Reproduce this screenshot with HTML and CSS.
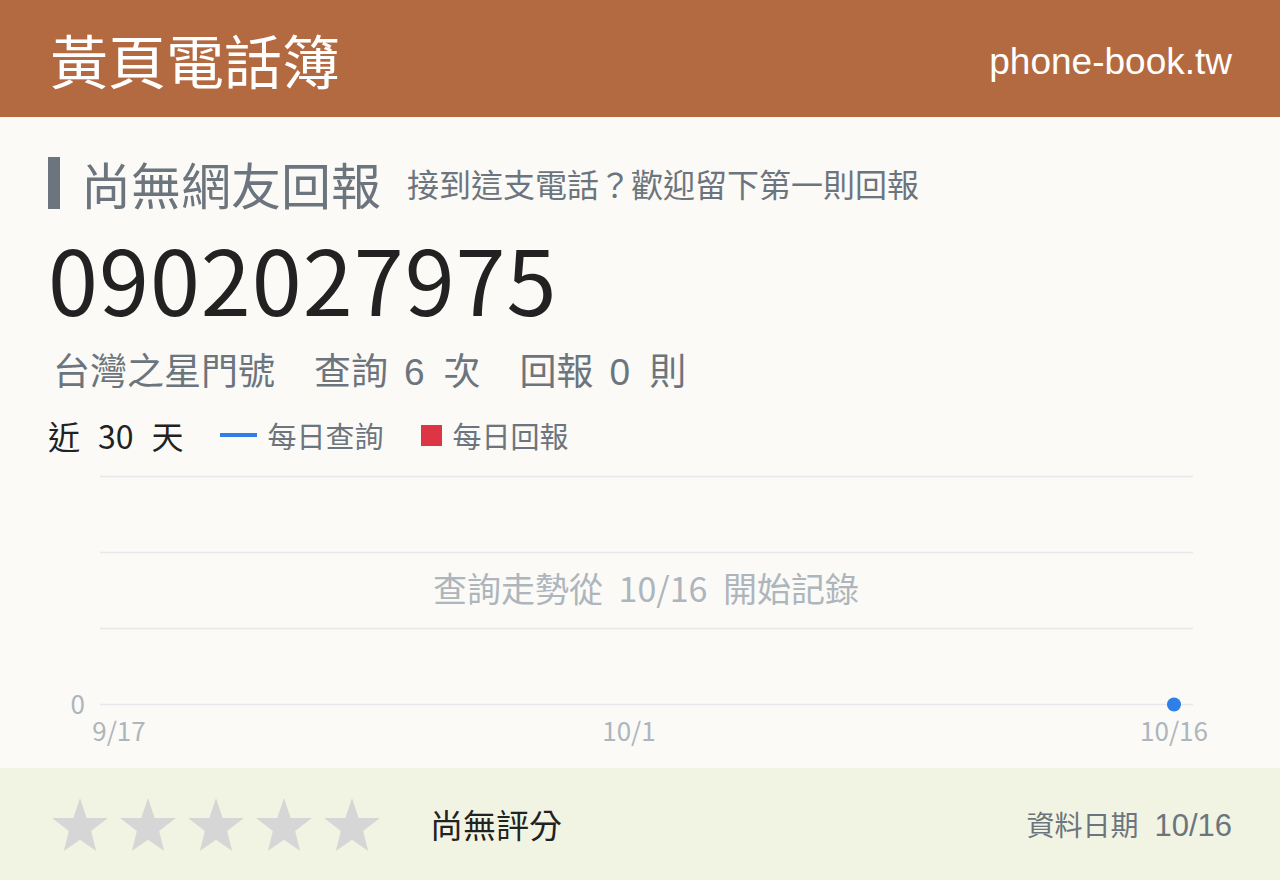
FILE: index.html
```html
<!DOCTYPE html>
<html lang="zh-Hant">
<head>
    <meta charset="UTF-8">
    <meta name="viewport" content="width=device-width, initial-scale=1.0">
    <title>0902027975 - 黃頁電話簿</title>
    <link rel="stylesheet" href="styles.css">
</head>
<body>
    <header class="topbar">
        <h1 class="brand">黃頁電話簿</h1>
        <span class="domain">phone-book.tw</span>
    </header>

    <main class="content">
        <div class="report-title">
            <h2>尚無網友回報</h2>
            <span class="hint">接到這支電話？歡迎留下第一則回報</span>
        </div>
        <div class="number">0902027975</div>
        <p class="stats">
            <span>台灣之星門號</span>
            <span>查詢<b>6</b>次</span>
            <span>回報<b>0</b>則</span>
        </p>

        <div class="legend">
            <span class="period">近<span class="num">30</span>天</span>
            <span class="key"><i class="line"></i>每日查詢</span>
            <span class="key"><i class="box"></i>每日回報</span>
        </div>

        <svg class="trend" width="1184" height="311" viewBox="0 0 1184 311">
            <g class="grid">
                <line x1="52" y1="19.5" x2="1145" y2="19.5"/>
                <line x1="52" y1="95.5" x2="1145" y2="95.5"/>
                <line x1="52" y1="171.5" x2="1145" y2="171.5"/>
                <line x1="52" y1="247.5" x2="1145" y2="247.5"/>
            </g>
            <text class="empty" x="598" y="145">查詢走勢從 10/16 開始記錄</text>
            <text class="tick y" x="37" y="257">0</text>
            <text class="tick" x="71" y="284">9/17</text>
            <text class="tick" x="581" y="284">10/1</text>
            <text class="tick" x="1126" y="284">10/16</text>
            <circle class="point" cx="1126" cy="247.5" r="7"/>
        </svg>
    </main>

    <footer class="rating">
        <div class="stars">
            <svg class="star" viewBox="0 0 100 95"><polygon points="50,0 62,36 100,36 70,59 79,95 50,75 21,95 30,59 0,36 38,36"/></svg>
            <svg class="star" viewBox="0 0 100 95"><polygon points="50,0 62,36 100,36 70,59 79,95 50,75 21,95 30,59 0,36 38,36"/></svg>
            <svg class="star" viewBox="0 0 100 95"><polygon points="50,0 62,36 100,36 70,59 79,95 50,75 21,95 30,59 0,36 38,36"/></svg>
            <svg class="star" viewBox="0 0 100 95"><polygon points="50,0 62,36 100,36 70,59 79,95 50,75 21,95 30,59 0,36 38,36"/></svg>
            <svg class="star" viewBox="0 0 100 95"><polygon points="50,0 62,36 100,36 70,59 79,95 50,75 21,95 30,59 0,36 38,36"/></svg>
        </div>
        <span class="score">尚無評分</span>
        <span class="updated">資料日期<b>10/16</b></span>
    </footer>
</body>
</html>
```

FILE: styles.css
```css
*{
    margin: 0;
    padding: 0;
    box-sizing: border-box;
}
body{
    width: 1280px;
    height: 880px;
    display: flex;
    flex-direction: column;
    background: #fbfaf6;
    font-family: "Noto Sans CJK TC", sans-serif;
    color: #222;
}
b{
    font-weight: normal;
    font-family: "Liberation Sans", "Noto Sans CJK TC", sans-serif;
}

/* top bar */
.topbar{
    flex-shrink: 0;
    height: 117px;
    background: #b46a40;
    color: #fff;
    display: flex;
    align-items: center;
    justify-content: space-between;
    padding: 0 48px 0 50px;
}
.brand{
    font-size: 58px;
    font-weight: normal;
    line-height: 1;
}
.domain{
    font-family: "Liberation Sans", sans-serif;
    font-size: 37px;
    padding-top: 6px;
}

/* main block */
.content{
    flex: 1;
    min-height: 0;
    overflow: hidden;
    padding: 40px 48px 0;
    display: flex;
    flex-direction: column;
}
.report-title{
    flex-shrink: 0;
    display: flex;
    align-items: center;
    height: 52px;
    border-left: 12px solid #6c757d;
    padding-left: 21px;
    color: #6c757d;
}
.report-title h2{
    font-size: 50px;
    font-weight: normal;
    line-height: 1;
}
.hint{
    font-size: 32px;
    margin-left: 26px;
}
.number{
    flex-shrink: 0;
    height: 120px;
    font-size: 90px;
    line-height: 120px;
    margin-top: 8px;
    letter-spacing: 1px;
}
.stats{
    flex-shrink: 0;
    display: flex;
    gap: 39px;
    height: 44px;
    font-size: 37px;
    line-height: 44px;
    color: #6c757d;
    padding-left: 5px;
    margin-top: 10px;
}
.stats b{
    margin: 0 19px 0 16px;
}
.legend{
    flex-shrink: 0;
    display: flex;
    align-items: center;
    height: 40px;
    margin-top: 24px;
    font-size: 29px;
}
.period{
    font-size: 32px;
    margin-right: 36px;
}
.period .num{
    margin: 0 18px;
}
.key{
    display: flex;
    align-items: center;
    color: #6c757d;
    margin-right: 37px;
}
.key .line{
    width: 37px;
    height: 4px;
    background: #2e7fe8;
    margin-right: 11px;
}
.key .box{
    width: 21px;
    height: 21px;
    background: #dc3545;
    margin-right: 11px;
}

/* chart */
.trend{
    flex-shrink: 0;
    display: block;
    margin-top: 2px;
}
.grid line{
    stroke: #e6e8ec;
    stroke-width: 1.5;
}
.trend text{
    font-family: "Noto Sans CJK TC", sans-serif;
    fill: #adb5bd;
    text-anchor: middle;
}
.trend .empty{
    font-size: 34px;
    word-spacing: 8px;
}
.trend .tick{
    font-size: 26px;
}
.trend .tick.y{
    text-anchor: end;
}
.point{
    fill: #2e7fe8;
}

/* rating */
.rating{
    flex-shrink: 0;
    height: 112px;
    background: #f2f4e3;
    display: flex;
    align-items: center;
    padding: 0 48px 0 52px;
}
.stars{
    display: flex;
    gap: 12px;
}
.star{
    width: 56px;
    height: 53px;
    fill: #d6d6d6;
}
.score{
    font-size: 33px;
    margin-left: 50px;
}
.updated{
    margin-left: auto;
    font-size: 28px;
    color: #6c757d;
}
.updated b{
    font-size: 31px;
    margin-left: 16px;
}
```
